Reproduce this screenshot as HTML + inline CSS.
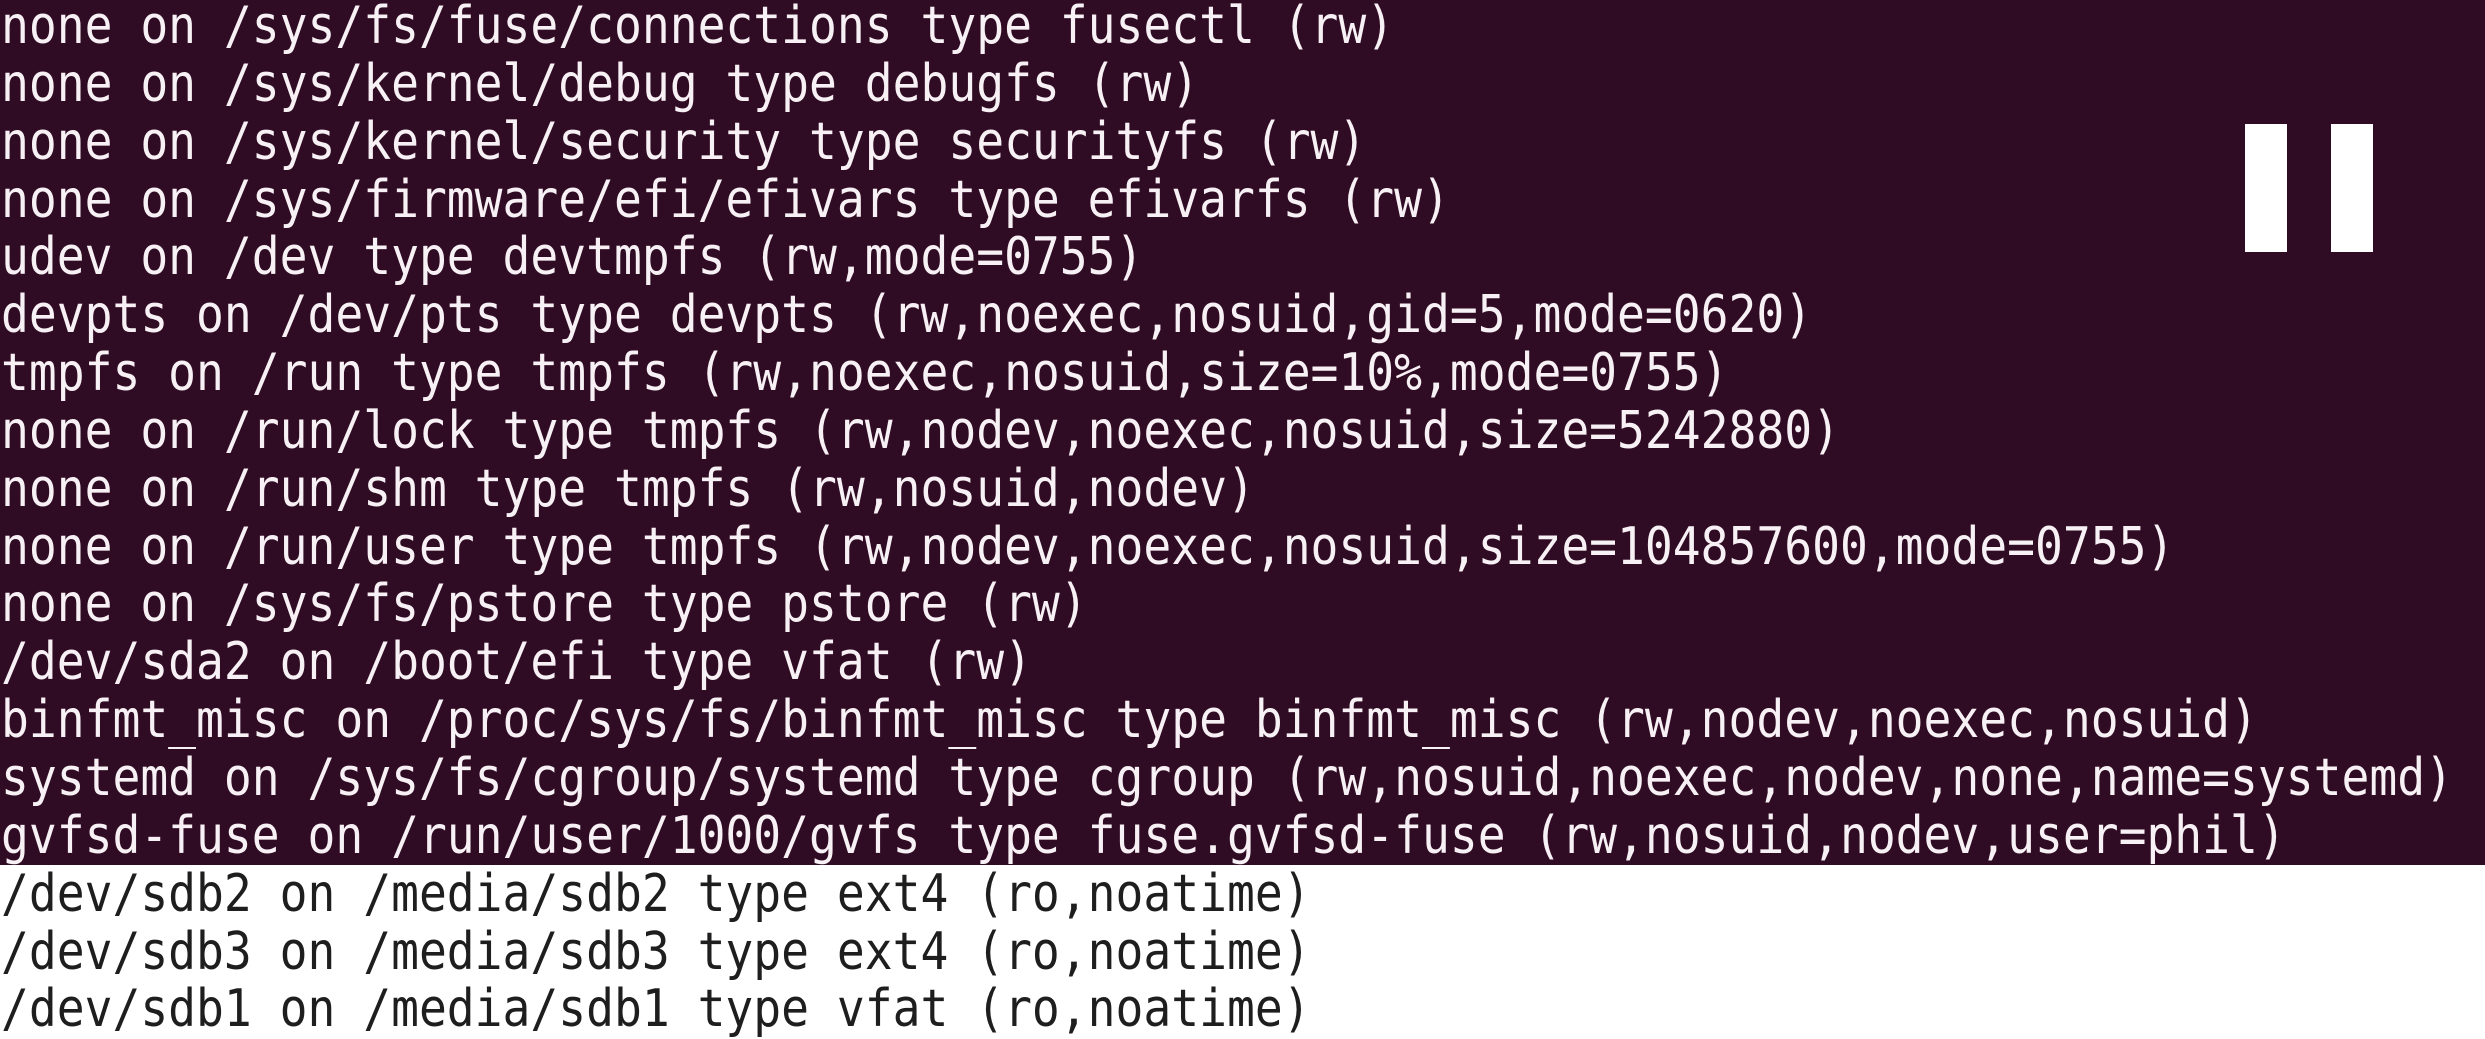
<!DOCTYPE html>
<html><head><meta charset="utf-8"><style>
html,body{margin:0;padding:0;}
body{width:2485px;height:1035px;overflow:hidden;background:#fff;position:relative;}
.dark{position:absolute;left:0;top:0;width:2485px;height:865px;background:#300c24;}
pre{position:absolute;left:1px;top:-2px;margin:0;font-family:"DejaVu Sans Mono","Liberation Mono",monospace;font-size:52px;line-height:57.85px;white-space:pre;transform:scaleX(0.89);transform-origin:0 0;}
.w{color:#f7f0f4;}
.b{color:#1e1e1e;}
.bar{position:absolute;top:124px;width:42px;height:128px;background:#fff;}
</style></head><body>
<div class="dark"></div>
<pre><span class="w">none on /sys/fs/fuse/connections type fusectl (rw)
none on /sys/kernel/debug type debugfs (rw)
none on /sys/kernel/security type securityfs (rw)
none on /sys/firmware/efi/efivars type efivarfs (rw)
udev on /dev type devtmpfs (rw,mode=0755)
devpts on /dev/pts type devpts (rw,noexec,nosuid,gid=5,mode=0620)
tmpfs on /run type tmpfs (rw,noexec,nosuid,size=10%,mode=0755)
none on /run/lock type tmpfs (rw,nodev,noexec,nosuid,size=5242880)
none on /run/shm type tmpfs (rw,nosuid,nodev)
none on /run/user type tmpfs (rw,nodev,noexec,nosuid,size=104857600,mode=0755)
none on /sys/fs/pstore type pstore (rw)
/dev/sda2 on /boot/efi type vfat (rw)
binfmt_misc on /proc/sys/fs/binfmt_misc type binfmt_misc (rw,nodev,noexec,nosuid)
systemd on /sys/fs/cgroup/systemd type cgroup (rw,nosuid,noexec,nodev,none,name=systemd)
gvfsd-fuse on /run/user/1000/gvfs type fuse.gvfsd-fuse (rw,nosuid,nodev,user=phil)</span>
<span class="b">/dev/sdb2 on /media/sdb2 type ext4 (ro,noatime)
/dev/sdb3 on /media/sdb3 type ext4 (ro,noatime)
/dev/sdb1 on /media/sdb1 type vfat (ro,noatime)</span></pre>
<div class="bar" style="left:2245px"></div>
<div class="bar" style="left:2331px"></div>
</body></html>
